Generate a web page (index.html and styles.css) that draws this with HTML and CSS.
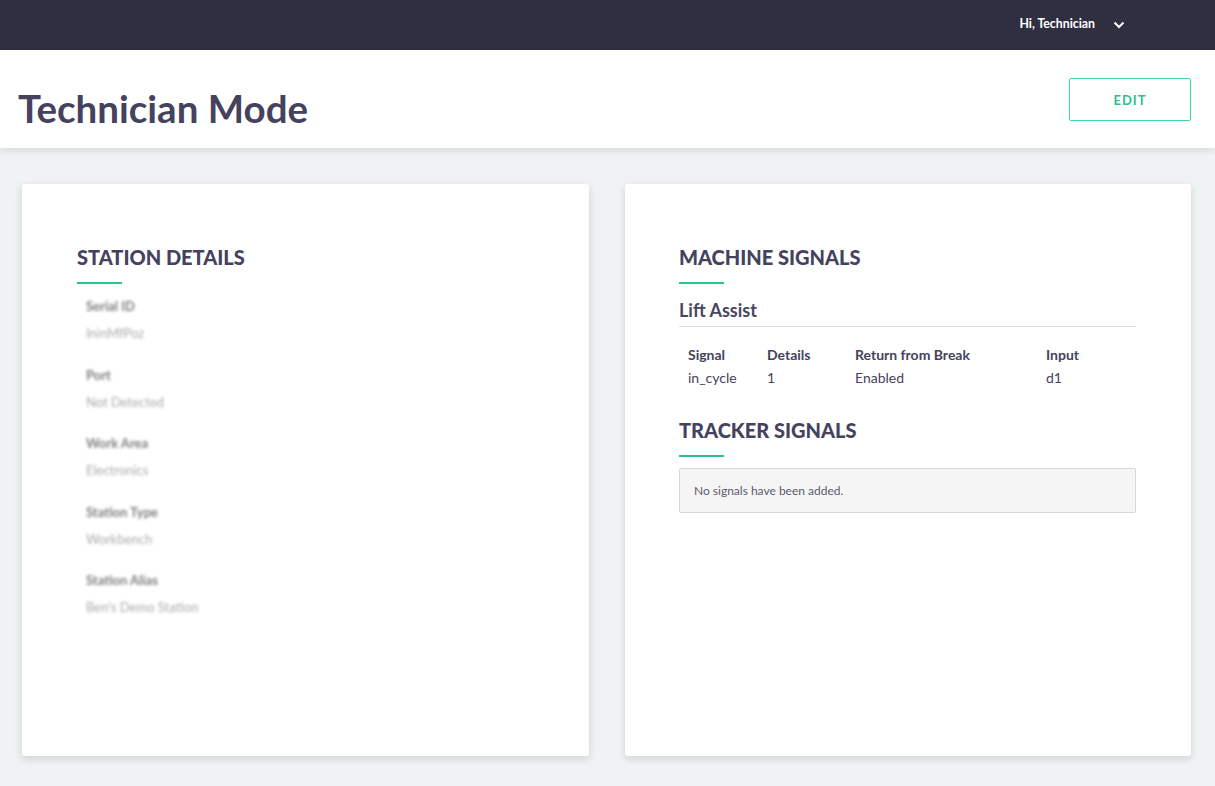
FILE: index.html
```html
<!DOCTYPE html>
<html>
<head>
<meta charset="utf-8">
<link rel="stylesheet" href="styles.css">
</head>
<body>
<div class="topbar">
  <div class="user">Hi, Technician
    <svg class="chev" width="12" height="8" viewBox="0 0 12 8"><path d="M1.5 1.5 L6 6 L10.5 1.5" fill="none" stroke="#fff" stroke-width="2"/></svg>
  </div>
</div>
<div class="header">
  <h1 class="title">Technician Mode</h1>
  <button class="edit">EDIT</button>
</div>
<main class="content">
  <section class="card">
    <h2 class="section-title">STATION DETAILS</h2>
    <div class="rule"></div>
    <div class="details">
      <div class="field"><div class="label">Serial ID</div><div class="value">IninMfPoz</div></div>
      <div class="field"><div class="label">Port</div><div class="value">Not Detected</div></div>
      <div class="field"><div class="label">Work Area</div><div class="value">Electronics</div></div>
      <div class="field"><div class="label">Station Type</div><div class="value">Workbench</div></div>
      <div class="field"><div class="label">Station Alias</div><div class="value">Ben's Demo Station</div></div>
    </div>
  </section>
  <section class="card right">
    <h2 class="section-title">MACHINE SIGNALS</h2>
    <div class="rule"></div>
    <h3 class="group">Lift Assist</h3>
    <table class="signals">
      <thead><tr><th class="c1">Signal</th><th class="c2">Details</th><th class="c3">Return from Break</th><th>Input</th></tr></thead>
      <tbody><tr><td>in_cycle</td><td>1</td><td>Enabled</td><td>d1</td></tr></tbody>
    </table>
    <h2 class="section-title tracker">TRACKER SIGNALS</h2>
    <div class="rule"></div>
    <div class="empty">No signals have been added.</div>
  </section>
</main>
</body>
</html>
```
FILE: styles.css
```css
* { box-sizing: border-box; }
html, body { margin: 0; padding: 0; }
body {
  font-family: Lato, "Noto Sans", sans-serif;
  background: #f0f3f4;
  color: #45425c;
  height: 786px;
  overflow: hidden;
}
.topbar {
  height: 50px;
  background: #302f42;
  display: flex;
  justify-content: flex-end;
  align-items: center;
  padding-right: 90px;
}
.user {
  color: #fff;
  font-size: 12.3px;
  font-weight: 700;
  display: flex;
  align-items: center;
  gap: 18px;
  padding-bottom: 3px;
}
.chev { margin-top: 2px; }
.header {
  height: 98px;
  background: #fff;
  display: flex;
  justify-content: space-between;
  align-items: flex-start;
  padding: 0 24px 0 18px;
  box-shadow: 0 2px 8px rgba(0,0,0,0.12);
  position: relative;
}
.title {
  margin: 34px 0 0 0;
  font-size: 38.5px;
  font-weight: 700;
  color: #45425e;
  line-height: 48px;
}
.edit {
  margin-top: 28px;
  width: 122px;
  height: 43px;
  background: #fff;
  border: 1px solid #3fd5a2;
  border-radius: 2px;
  color: #2cbf8c;
  font-family: inherit;
  font-size: 13px;
  font-weight: 700;
  letter-spacing: 1px;
}
.content {
  display: grid;
  grid-template-columns: 567px 566px;
  gap: 36px;
  padding: 36px 24px 0 22px;
}
.card {
  background: #fff;
  height: 572px;
  border-radius: 3px;
  box-shadow: 0 3px 8px rgba(0,0,0,0.14);
  padding: 60px 55px 0 55px;
}
.card.right { padding-left: 54px; }
.section-title {
  margin: 0;
  font-size: 20px;
  font-weight: 900;
  color: #45425e;
  line-height: 26px;
}
.rule {
  width: 45px;
  height: 2px;
  background: #2dc28f;
  margin-top: 12px;
}
.details {
  padding: 13px 0 0 9px;
  filter: blur(1.4px);
}
.field { height: 68.5px; }
.label {
  font-size: 13px;
  font-weight: 700;
  color: #7d7d7d;
  line-height: 18px;
}
.value {
  margin-top: 9px;
  font-size: 13px;
  color: #aaaaaa;
  line-height: 18px;
}
.group {
  margin: 14px 0 0 0;
  font-size: 18px;
  font-weight: 700;
  color: #4a475f;
  line-height: 24px;
  padding-bottom: 4px;
  border-bottom: 1px solid #dedede;
}
.signals {
  margin: 17px 0 0 9px;
  border-collapse: collapse;
  font-size: 14px;
  color: #45425e;
}
.signals th {
  text-align: left;
  font-weight: 700;
  padding: 0;
  line-height: 22px;
}
.signals td { padding: 0; line-height: 24px; }
.c1 { width: 79px; }
.c2 { width: 88px; }
.c3 { width: 191px; }
.tracker { margin-top: 27px; }
.empty {
  margin-top: 11px;
  height: 45px;
  background: #f5f5f5;
  border: 1px solid #d8d8d8;
  border-radius: 2px;
  padding: 0 14px;
  display: flex;
  align-items: center;
  font-size: 12px;
  color: #5c5a6c;
}
```
